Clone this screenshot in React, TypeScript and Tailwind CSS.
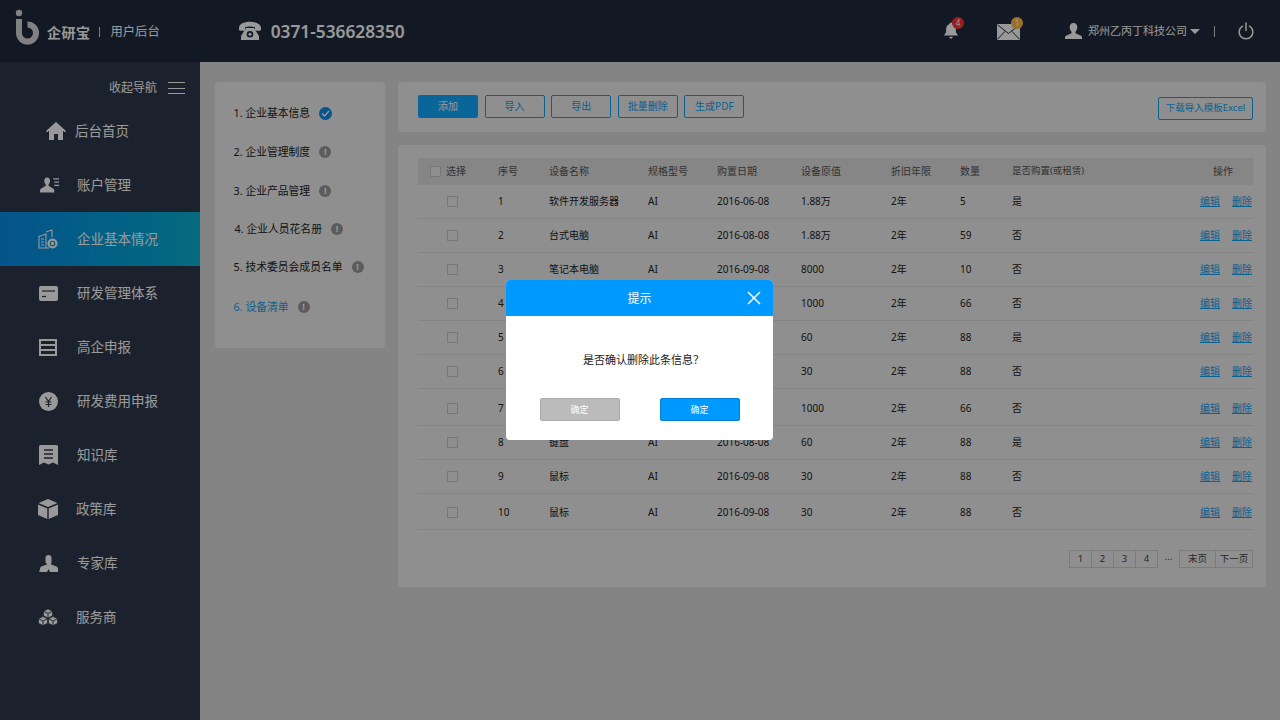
import React from "react";

const Logo = () => (
  <svg width="24" height="36" viewBox="0 0 24 36" className="shrink-0">
    <circle cx="4" cy="4" r="3.200" fill="#d8d8d8" />
    <path d="M12.500 15.500A8.500 8.500 0 1 1 4 24V10" fill="none" stroke="#d8d8d8" strokeWidth="6" />
  </svg>
);

const Phone = () => (
  <svg width="24" height="20" viewBox="0 0 24 20">
    <path d="M1 7C1 3 6 .8 12 .8S23 3 23 7v1.500c0 .8-.6 1.200-1.300 1.200h-3.400c-.8 0-1.300-.5-1.300-1.200V6.300c-1.400-.6-3.100-.9-5-.9s-3.600.3-5 .9v2.200c0 .7-.5 1.200-1.300 1.200H2.300C1.600 9.700 1 9.300 1 8.500z" fill="#fff" />
    <path d="M8 7h8l5 8v4H3v-4z" fill="#fff" />
    <circle cx="12" cy="13.200" r="3.300" fill="#212b3c" />
    <circle cx="12" cy="13.200" r="1.500" fill="#fff" />
  </svg>
);

const Bell = () => (
  <svg width="16" height="18" viewBox="0 0 18 20">
    <circle cx="9" cy="2" r="1.600" fill="#fff" />
    <path d="M9 2c3.500 0 5.500 2.500 5.500 6v3.500l2.500 3.500H1l2.500-3.500V8C3.500 4.500 5.500 2 9 2z" fill="#fff" />
    <path d="M7 16.500h4c0 1.200-.9 2-2 2s-2-.8-2-2z" fill="#fff" />
  </svg>
);

const Mail = () => (
  <svg width="23" height="16" viewBox="0 0 23 16">
    <rect x="0" y="0" width="23" height="16" fill="#fff" />
    <path d="M.5.800 11.500 9.500 22.500.800M.5 15.300l7.500-8M22.500 15.300l-7.500-8" stroke="#212b3c" strokeWidth="1" fill="none" />
  </svg>
);

const User = () => (
  <svg width="17" height="16" viewBox="0 0 17 16">
    <path d="M8.500 0c2.500 0 3.800 1.800 3.800 4.200 0 1.900-.8 3.600-1.800 4.500v1.500l5.500 2.500c.7.300 1 .8 1 1.500V16H0v-1.800c0-.7.300-1.200 1-1.500l5.500-2.500V8.700c-1-.9-1.800-2.600-1.800-4.500C4.700 1.800 6 0 8.500 0z" fill="#fff" />
  </svg>
);

const Power = () => (
  <svg width="16" height="18" viewBox="0 0 16 18" fill="none" stroke="#fff" strokeWidth="1.500" strokeLinecap="round">
    <path d="M8 1v7.500" />
    <path d="M4.500 4.200a6.800 6.800 0 1 0 7 0" />
  </svg>
);

const c = "#fff";
const bg = "#2f3a4b";
const Cube = ({ x, y }: { x: number; y: number }) => (
  <g transform={`translate(${x} ${y})`}>
    <path d="M4.500 0 9 2.200v4.600L4.500 9 0 6.800V2.200z" fill={c} stroke={bg} strokeWidth=".7" />
    <path d="M0 2.200 4.500 4.500 9 2.200M4.500 4.500V9" fill="none" stroke={bg} strokeWidth=".9" />
  </g>
);

const navIcons: Record<string, React.ReactNode> = {
  home: (
    <svg width="20" height="18" viewBox="0 0 20 18"><path d="M10 0 20 9l-1.200 1.300L17 8.800V18h-5v-6H8v6H3V8.800l-1.800 1.500L0 9z" fill={c} /></svg>
  ),
  account: (
    <svg width="21" height="16" viewBox="0 0 21 16">
      <path d="M7.500 0c2 0 3 1.500 3 3.500 0 1.700-.7 3-1.500 3.800v1.500l5 3.200c.6.400 1 1 1 1.700V16H0v-2.300c0-.7.400-1.300 1-1.700l5-3.200V7.300C5.200 6.500 4.500 5.200 4.500 3.500 4.500 1.500 5.500 0 7.500 0z" fill={c} />
      <path d="M14 1.500h6M15 5h5M15 8.500h5" stroke={c} strokeWidth="1.300" />
    </svg>
  ),
  company: (
    <svg width="20" height="20" viewBox="0 0 20 20" fill="none" stroke={c} strokeWidth="1.100">
      <path d="M1 7.500 8 5v14H1zM8 3l6-2v7M8 19h3" />
      <path d="M3 10h3M3 13h3M3 16h3" />
      <circle cx="14.500" cy="14.500" r="5" fill={c} stroke="none" />
      <circle cx="14.500" cy="14.500" r="2.300" stroke="#1095c5" />
    </svg>
  ),
  card: (
    <svg width="19" height="15" viewBox="0 0 19 15">
      <rect width="19" height="15" rx="2" fill={c} />
      <path d="M3 5h13" stroke={bg} strokeWidth="1.200" />
      <path d="M3 10.500h4" stroke={bg} strokeWidth="1.200" />
    </svg>
  ),
  list: (
    <svg width="18" height="17" viewBox="0 0 18 17" fill="none" stroke={c} strokeWidth="2">
      <rect x="1" y="1" width="16" height="15" />
      <path d="M1 6h16M1 11h16" />
    </svg>
  ),
  yen: (
    <svg width="19" height="19" viewBox="0 0 19 19">
      <circle cx="9.500" cy="9.500" r="9.500" fill={c} />
      <path d="M6.500 5 9.500 9.500 12.500 5M6.500 10h6M6.500 12.500h6M9.500 9.500V15" stroke={bg} strokeWidth="1.200" fill="none" />
    </svg>
  ),
  book: (
    <svg width="19" height="20" viewBox="0 0 19 20">
      <path d="M1.500 0h16A1.500 1.500 0 0 1 19 1.500V20l-5-2.500-4.500 2-4.500-2L0 20V1.500A1.500 1.500 0 0 1 1.500 0z" fill={c} />
      <path d="M5 5h9M5 9h9M5 13h9" stroke={bg} strokeWidth="1.400" />
    </svg>
  ),
  box: (
    <svg width="20" height="20" viewBox="0 0 20 20">
      <path d="M10 0 19.500 4 10 8 .5 4z" fill={c} />
      <path d="M0 5.500 9.300 9.500V20L0 16zM20 5.500 10.700 9.500V20L20 16z" fill={c} />
    </svg>
  ),
  expert: (
    <svg width="19" height="17" viewBox="0 0 19 17">
      <path d="M9.500 0c2 0 3 1 3 3v4c0 1-.3 1.700-.8 2.200l5.800 2.300c.7.300 1.100.7 1.300 1.500l1 4H11l-1.500-3-1.500 3H.2l1-4c.2-.8.600-1.200 1.300-1.500l5.800-2.300C7.800 8.700 6.500 8 6.500 7V3c0-2 1-3 3-3z" fill={c} />
    </svg>
  ),
  service: (
    <svg width="20" height="17" viewBox="0 0 20 17">
      <Cube x={5.500} y={0} />
      <Cube x={0.500} y={7.500} />
      <Cube x={10.500} y={7.500} />
    </svg>
  ),
};

const nav = [
  ["home", "后台首页", "ml-[46px]", "ml-[9px]"],
  ["account", "账户管理", "ml-[40px]", "ml-[17px]"],
  ["company", "企业基本情况", "ml-[38px]", "ml-[19px]"],
  ["card", "研发管理体系", "ml-[38px]", "ml-[19px]"],
  ["list", "高企申报", "ml-[38px]", "ml-[19px]"],
  ["yen", "研发费用申报", "ml-[38px]", "ml-[19px]"],
  ["book", "知识库", "ml-[38px]", "ml-[19px]"],
  ["box", "政策库", "ml-[38px]", "ml-[18px]"],
  ["expert", "专家库", "ml-[38px]", "ml-[19px]"],
  ["service", "服务商", "ml-[38px]", "ml-[18px]"],
];

const steps = [
  { t: "1. 企业基本信息", done: true, cls: "", mt: "" },
  { t: "2. 企业管理制度", done: false, cls: "", mt: "mt-[19px]" },
  { t: "3. 企业产品管理", done: false, cls: "", mt: "mt-[19px]" },
  { t: "4. 企业人员花名册", done: false, cls: "ml-px", mt: "mt-[18px]" },
  { t: "5. 技术委员会成员名单", done: false, cls: "", mt: "mt-[18px]" },
  { t: "6. 设备清单", done: false, cls: "text-[#11a3f0]", mt: "mt-[20px]" },
];

const rows = [
  ["1", "软件开发服务器", "AI", "2016-06-08", "1.88万", "5", "是", "h-[34px]"],
  ["2", "台式电脑", "AI", "2016-08-08", "1.88万", "59", "否", "h-[34px]"],
  ["3", "笔记本电脑", "AI", "2016-09-08", "8000", "10", "否", "h-[34px]"],
  ["4", "", "", "", "1000", "66", "否", "h-[34px]"],
  ["5", "", "", "", "60", "88", "是", "h-[34px]"],
  ["6", "", "", "", "30", "88", "否", "h-[34px]"],
  ["7", "", "", "", "1000", "66", "否", "h-[37px] pt-[3px]"],
  ["8", "键盘", "AI", "2016-08-08", "60", "88", "是", "h-[34px]"],
  ["9", "鼠标", "AI", "2016-09-08", "30", "88", "否", "h-[34px]"],
  ["10", "鼠标", "AI", "2016-09-08", "30", "88", "否", "h-[36px] pt-[2px]"],
];

const grid = "grid grid-cols-[80px_51px_99px_69px_84px_90px_69px_52px_1fr] items-center";

const OutlineBtn = ({ children, w = "w-[60px]", extra = "text-[10px]" }: { children: React.ReactNode; w?: string; extra?: string }) => (
  <button className={`${w} ${extra} h-[23px] rounded-[2px] border border-[#11a3f0] text-[#11a3f0] flex items-center justify-center`}>
    {children}
  </button>
);

export default function App() {
  return (
    <div className="relative w-[1280px] h-[720px] overflow-hidden bg-[#dcdcdc] flex flex-col font-['Noto_Sans','Noto_Sans_CJK_SC',sans-serif] text-[#222]">
      <header className="h-[62px] shrink-0 bg-[#212b3c] flex items-center text-white">
        <div className="pl-[15px] mt-[-8px]"><Logo /></div>
        <span className="ml-2 text-[14px] font-bold tracking-[0.5px] mt-[2px]">企研宝</span>
        <span className="ml-[8px] w-px h-[10px] bg-white/80 mt-[1px]" />
        <span className="ml-[11px] text-[12.300px] mt-[2px]">用户后台</span>
        <div className="ml-[78px]"><Phone /></div>
        <span className="ml-[9px] text-[17.300px] font-semibold mt-[2px]">0371-536628350</span>
        <div className="ml-auto flex items-center">
          <div className="relative mt-[-1px]">
            <Bell />
            <span className="absolute -top-[5px] left-[9px] w-[12px] h-[12px] rounded-full bg-[#ff3333] text-white text-[8px] leading-[12px] text-center">4</span>
          </div>
          <div className="relative ml-[38px] mt-[1px]">
            <Mail />
            <span className="absolute -top-[7px] left-[14px] w-[12px] h-[12px] rounded-full bg-[#ffbb44] text-white text-[8px] leading-[12px] text-center">1</span>
          </div>
          <div className="ml-[45px]"><User /></div>
          <span className="ml-[6px] text-[11px]">郑州乙丙丁科技公司</span>
          <span className="ml-[3px] w-0 h-0 border-x-[5px] border-x-transparent border-t-[5px] border-t-white" />
          <span className="ml-[14px] w-px h-[11px] bg-white/80" />
          <div className="ml-[23px] mr-[26px]"><Power /></div>
        </div>
      </header>
      <div className="flex flex-1 min-h-0">
        <aside className="w-[200px] shrink-0 bg-[#2f3a4b] text-white flex flex-col">
          <div className="h-[42px] shrink-0 flex items-center justify-end pr-[15px] pt-[10px]">
            <span className="text-[12px]">收起导航</span>
            <span className="ml-[11px] w-[17px] h-[12px] flex flex-col justify-between">
              <i className="block h-px bg-white" /><i className="block h-px bg-white" /><i className="block h-px bg-white" />
            </span>
          </div>
          {nav.map(([icon, label, iconMl, textMl], i) => (
            <div
              key={label}
              className={`h-[54px] flex items-center shrink-0 ${i === 2 ? "bg-gradient-to-r from-[#0b8ce8] to-[#0cb2d4]" : ""}`}
            >
              <span className={`${iconMl} w-[20px] flex justify-center`}>{navIcons[icon]}</span>
              <span className={`${textMl} text-[13.500px]`}>{label}</span>
            </div>
          ))}
        </aside>
        <main className="flex-1 min-w-0 pl-[15px] pr-[14px] pt-[20px] flex gap-[13px] items-start">
          <div className="w-[170px] h-[266px] shrink-0 rounded-[3px] bg-[#eeeeee] pl-[18.500px] pt-[21px] flex flex-col">
            {steps.map((s) => (
              <div key={s.t} className={`h-[20px] flex items-center text-[10.800px] ${s.cls} ${s.mt}`}>
                <span>{s.t}</span>
                {s.done ? (
                  <span className="ml-[9px] w-[13px] h-[13px] rounded-full bg-[#0d8aea] flex items-center justify-center">
                    <svg width="9" height="7" viewBox="0 0 9 7" fill="none" stroke="#fff" strokeWidth="1.300"><path d="M1 3.500 3.500 6 8 1" /></svg>
                  </span>
                ) : (
                  <span className="ml-[9px] w-[12px] h-[12px] rounded-full bg-[#999] text-white text-[9px] font-bold leading-[12px] text-center">!</span>
                )}
              </div>
            ))}
          </div>
          <div className="flex-1 min-w-0 flex flex-col gap-[13px]">
            <div className="h-[50px] rounded-[3px] bg-[#eeeeee] pl-[20px] pr-[13px] flex items-center justify-between">
              <div className="flex items-center gap-[6.600px] mt-[-2px]">
                <button className="w-[60px] h-[23px] rounded-[2px] bg-[#11a8ff] text-white text-[10px]">添加</button>
                <OutlineBtn>导入</OutlineBtn>
                <OutlineBtn>导出</OutlineBtn>
                <OutlineBtn>批量删除</OutlineBtn>
                <OutlineBtn>生成PDF</OutlineBtn>
              </div>
              <div className="mt-[3px]"><OutlineBtn w="w-[95px]" extra="text-[9.500px]">下载导入模板Excel</OutlineBtn></div>
            </div>
            <div className="h-[442px] rounded-[3px] bg-[#eeeeee] pl-[20px] pr-[13px] pt-[13px] text-[10px]">
              <div className={`${grid} h-[27px] bg-[#dfdfdf] text-[#555]`}>
                <div className="flex items-center pl-[12px] gap-[5px]">
                  <span className="w-[11px] h-[11px] border border-[#c8c8c8] bg-[#eee]" />
                  <span>选择</span>
                </div>
                <span>序号</span><span>设备名称</span><span>规格型号</span><span>购置日期</span><span>设备原值</span><span>折旧年限</span><span>数量</span>
                <div className="flex justify-between pr-[20px]"><span className="text-[9.500px]">是否购置(或租赁)</span><span>操作</span></div>
              </div>
              {rows.map((r) => (
                <div key={r[0]} className={`${grid} ${r[7]} border-b border-[#dcdcdc]`}>
                  <span className="ml-[29px] w-[11px] h-[11px] border border-[#c8c8c8]" />
                  <span>{r[0]}</span>
                  <span>{r[1]}</span>
                  <span>{r[2]}</span>
                  <span>{r[3]}</span>
                  <span>{r[4]}</span>
                  <span>2年</span>
                  <span>{r[5]}</span>
                  <div className="flex justify-between pr-px">
                    <span>{r[6]}</span>
                    <span className="flex gap-[12px] text-[#11a3f0] underline"><a>编辑</a><a>删除</a></span>
                  </div>
                </div>
              ))}
              <div className="flex justify-end items-center mt-[20px] text-[9.500px] text-[#444]">
                {["1", "2", "3", "4"].map((p) => (
                  <span key={p} className="w-[23px] h-[18px] -ml-px first:ml-0 border border-[#cfcfcf] flex items-center justify-center">{p}</span>
                ))}
                <span className="w-[21px] text-center -mt-1">...</span>
                <span className="w-[37px] h-[18px] border border-[#cfcfcf] flex items-center justify-center">末页</span>
                <span className="w-[38px] h-[18px] -ml-px border border-[#cfcfcf] flex items-center justify-center">下一页</span>
              </div>
            </div>
          </div>
        </main>
      </div>
      <div className="absolute inset-0 bg-black/40 flex items-center justify-center">
        <div className="w-[267px] h-[160px] mr-px rounded-[4px] bg-white overflow-hidden flex flex-col">
          <div className="h-[36px] shrink-0 bg-[#0099ff] relative flex items-center justify-center text-white text-[12px] pt-[1px]">
            提示
            <svg className="absolute right-[12px] top-[11px]" width="14" height="14" viewBox="0 0 14 14" stroke="#fff" strokeWidth="1.500"><path d="M1 1l12 12M13 1 1 13" /></svg>
          </div>
          <div className="h-[82px] shrink-0 flex items-center justify-center text-[11px] text-[#222] pt-[7px] pl-[8px]">是否确认删除此条信息？</div>
          <div className="flex justify-center gap-[40px]">
            <button className="w-[80px] h-[23px] rounded-[2px] bg-[#bbbbbb] border border-[#aaaaaa] text-white text-[9px]">确定</button>
            <button className="w-[80px] h-[23px] rounded-[2px] bg-[#0099ff] border border-[#0080d8] text-white text-[9px]">确定</button>
          </div>
        </div>
      </div>
    </div>
  );
}
